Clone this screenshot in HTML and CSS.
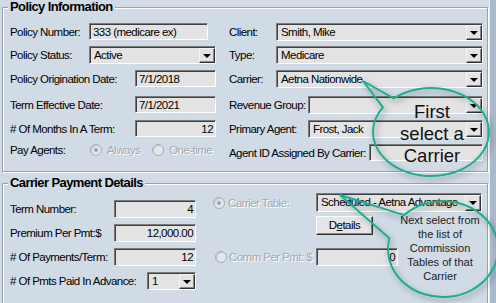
FILE: index.html
```html
<!DOCTYPE html>
<html>
<head>
<meta charset="utf-8">
<link rel="stylesheet" href="styles.css">
</head>
<body>
<div class="window">
  <div class="content">
    <fieldset class="group g1">
      <legend>Policy Information</legend>
      <div class="grid1">
        <div class="row"><span class="lbl w79">Policy Number:</span><div class="tb w119">333 (medicare ex)</div></div>
        <div class="row"><span class="lbl w47">Client:</span><div class="combo w207"><span class="val">Smith, Mike</span><span class="btn"></span></div></div>

        <div class="row"><span class="lbl w79">Policy Status:</span><div class="combo w127"><span class="val">Active</span><span class="btn"></span></div></div>
        <div class="row"><span class="lbl w47">Type:</span><div class="combo w207"><span class="val">Medicare</span><span class="btn"></span></div></div>

        <div class="row"><span class="lbl w125">Policy Origination Date:</span><div class="tb w81">7/1/2018</div></div>
        <div class="row"><span class="lbl w47">Carrier:</span><div class="combo w207"><span class="val">Aetna Nationwide</span><span class="btn"></span></div></div>

        <div class="row"><span class="lbl w125">Term Effective Date:</span><div class="tb w81">7/1/2021</div></div>
        <div class="row"><span class="lbl w79">Revenue Group:</span><div class="combo w175"><span class="val"></span><span class="btn"></span></div></div>

        <div class="row"><span class="lbl w125"># Of Months In A Term:</span><div class="tb w81 r">12</div></div>
        <div class="row"><span class="lbl w79">Primary Agent:</span><div class="combo w175"><span class="val">Frost, Jack</span><span class="btn"></span></div></div>

        <div class="row"><span class="lbl w80">Pay Agents:</span><span class="radio checked"></span><span class="dis rl">Always</span><span class="radio r2"></span><span class="dis rl">One-time</span></div>
        <div class="row"><span class="lbl w140">Agent ID Assigned By Carrier:</span><div class="tb w114"></div></div>
      </div>
    </fieldset>

    <fieldset class="group g2">
      <legend>Carrier Payment Details</legend>
      <div class="grid2">
        <div class="leftcol">
          <div class="row"><span class="lbl w104">Term Number:</span><div class="tb w82 h18 r">4</div></div>
          <div class="row"><span class="lbl w104">Premium Per Pmt:$</span><div class="tb w82 h18 r">12,000.00</div></div>
          <div class="row"><span class="lbl w104"># Of Payments/Term:</span><div class="tb w82 h18 r">12</div></div>
          <div class="row"><span class="lbl w137"># Of Pmts Paid In Advance:</span><div class="combo w49"><span class="val">1</span><span class="btn"></span></div></div>
        </div>
        <div class="rightcol">
          <div class="row"><span class="radio checked"></span><span class="dis w88">Carrier Table:</span><div class="combo w166 h19"><span class="val">Scheduled - Aetna Advantage</span><span class="btn"></span></div></div>
          <div class="row btnrow"><div class="button">D<u>e</u>tails</div></div>
          <div class="row commrow"><span class="radio"></span><span class="dis w87">Comm Per Pmt: $</span><div class="tb w82 h18 r">0</div></div>
        </div>
      </div>
    </fieldset>
  </div>
  <div class="strip"></div>

  <svg class="callouts" width="496" height="303" viewBox="0 0 496 303">
    <defs>
      <filter id="sh" x="-30%" y="-30%" width="160%" height="160%">
        <feGaussianBlur in="SourceAlpha" stdDeviation="3"/>
        <feOffset dx="2" dy="3" result="b"/>
        <feComponentTransfer in="b" result="c"><feFuncA type="linear" slope="0.4"/></feComponentTransfer>
        <feMerge><feMergeNode in="c"/><feMergeNode in="SourceGraphic"/></feMerge>
      </filter>
    </defs>
    <path class="bubble" filter="url(#sh)" d="M363,81 L382.9,107.4 A58,44 0 1,0 393.7,98.3 Z"/>
    <path class="bubble" filter="url(#sh)" d="M340,195 L389.4,238.2 A55,48 0 1,0 404.1,215.1 Z"/>
    <text class="big" x="432" y="118">First</text>
    <text class="big" x="432" y="140">select a</text>
    <text class="big" x="432" y="162">Carrier</text>
    <text class="small" x="440" y="224">Next select from</text>
    <text class="small" x="440" y="238">the list of</text>
    <text class="small" x="440" y="252">Commission</text>
    <text class="small" x="440" y="266">Tables of that</text>
    <text class="small" x="440" y="280">Carrier</text>
  </svg>
</div>
</body>
</html>
```

FILE: styles.css
```css
html, body {
  margin: 0;
  padding: 0;
}
body {
  width: 496px;
  height: 303px;
  overflow: hidden;
  background: #aab8cb;
  font-family: "Liberation Sans", Arial, sans-serif;
  font-size: 11.5px;
  letter-spacing: -0.55px;
  color: #000;
}
.window {
  position: relative;
  display: flex;
  height: 303px;
}
.content {
  width: 490px;
  height: 303px;
  background: #d1dbe6;
  padding-left: 2px;
  box-sizing: border-box;
  border-right: 1px solid #e8eef5;
}
.strip {
  flex: 1;
  background: #aab8cb;
}
.group {
  margin: 0;
  width: 486px;
  box-sizing: border-box;
  border: 1px solid #98a1ac;
  box-shadow: inset 1px 1px 0 #fff, 1px 1px 0 #fff;
  padding: 0 0 0 7px;
}
.group legend {
  font-weight: bold;
  font-size: 13px;
  letter-spacing: -0.6px;
  line-height: 14px;
  padding: 0 2px;
  margin-left: -2px;
  background: #d1dbe6;
}
.g1 {
  height: 172px;
}
.g2 {
  margin-top: 4px;
  height: 150px;
}
.grid1 {
  display: grid;
  grid-template-columns: 219px 254px;
  grid-template-rows: 23px 24px 26px 24px 24px 24px;
  margin-top: 9px;
}
.row {
  display: flex;
  align-items: center;
  align-self: start;
}
.lbl {
  flex: none;
  white-space: nowrap;
}
.w47 { width: 47px; }
.w79 { width: 79px; }
.w80 { width: 80px; }
.w104 { width: 104px; }
.w125 { width: 125px; }
.w137 { width: 137px; }
.w140 { width: 140px; }

.tb {
  flex: none;
  height: 17px;
  box-sizing: border-box;
  border: 1px solid;
  border-color: #7b7b7b #fff #fff #7b7b7b;
  box-shadow: inset 1px 1px 0 #404040;
  background: #e3e3e3;
  padding: 0 3px 0 3px;
  line-height: 16px;
  white-space: nowrap;
  overflow: hidden;
}
.tb.r { text-align: right; padding-right: 2px; }
.h18 { height: 18px; line-height: 17px; }
.w81 { width: 81px; }
.w82 { width: 82px; }
.w114 { width: 114px; }
.w119 { width: 119px; }

.combo {
  flex: none;
  display: flex;
  height: 18px;
  box-sizing: border-box;
  border: 1px solid;
  border-color: #7b7b7b #fff #fff #7b7b7b;
  box-shadow: inset 1px 1px 0 #404040;
  background: #e3e3e3;
}
.combo.h19 { height: 19px; }
.combo .val {
  flex: 1;
  padding-left: 4px;
  line-height: 16px;
  white-space: nowrap;
  overflow: hidden;
}
.combo .btn {
  flex: none;
  position: relative;
  width: 16px;
  margin: 1px 0 0 0;
  box-sizing: border-box;
  background: #e3e3e3;
  border: 1px solid;
  border-color: #f4f4f4 #303030 #303030 #f4f4f4;
  box-shadow: inset -1px -1px 0 #888;
}
.combo .btn::after {
  content: "";
  position: absolute;
  left: 3px;
  top: 5px;
  border-left: 4px solid transparent;
  border-right: 4px solid transparent;
  border-top: 4px solid #000;
}
.w49 { width: 49px; }
.w127 { width: 127px; }
.w166 { width: 166px; }
.w175 { width: 175px; }
.w207 { width: 207px; }

.radio {
  flex: none;
  position: relative;
  width: 12px;
  height: 12px;
  border-radius: 50%;
  box-sizing: border-box;
  background: #e4e7ea;
  border: 1px solid #a7acb2;
  box-shadow: inset 1px 1px 0 #c4c8cc;
}
.radio.checked::after {
  content: "";
  position: absolute;
  left: 3px;
  top: 3px;
  width: 4px;
  height: 4px;
  border-radius: 50%;
  background: #a0a5ab;
}
.dis {
  flex: none;
  color: #a2a9b2;
  text-shadow: 1px 1px 0 #fff;
  white-space: nowrap;
}
.rl { margin-left: 5px; }
.r2 { margin-left: 12px; }
.w87 { width: 87px; margin-left: 2px; }
.w88 { width: 88px; margin-left: 3px; }

.grid2 {
  display: flex;
}
.leftcol {
  width: 203px;
  margin-top: 10px;
  display: flex;
  flex-direction: column;
  gap: 6px;
}
.rightcol {
  display: flex;
  flex-direction: column;
  margin-top: 3px;
}
.btnrow {
  margin-top: 4px;
  padding-left: 103px;
}
.commrow {
  margin-top: 13px;
  padding-left: 2px;
}
.button {
  width: 57px;
  height: 19px;
  box-sizing: border-box;
  border: 1px solid;
  border-color: #fff #303030 #303030 #fff;
  box-shadow: inset -1px -1px 0 #888;
  background: #e6e6e6;
  text-align: center;
  line-height: 17px;
}

.callouts {
  position: absolute;
  left: 0;
  top: 0;
  pointer-events: none;
  letter-spacing: 0;
}
.bubble {
  fill: none;
  stroke: #1fae8f;
  stroke-width: 2;
  stroke-linejoin: round;
}
.callouts text {
  text-anchor: middle;
  font-family: "Liberation Sans", Arial, sans-serif;
  fill: #111;
}
.callouts .big { font-size: 18.5px; }
.callouts .small { font-size: 11px; fill: #1a1a1a; }
```
